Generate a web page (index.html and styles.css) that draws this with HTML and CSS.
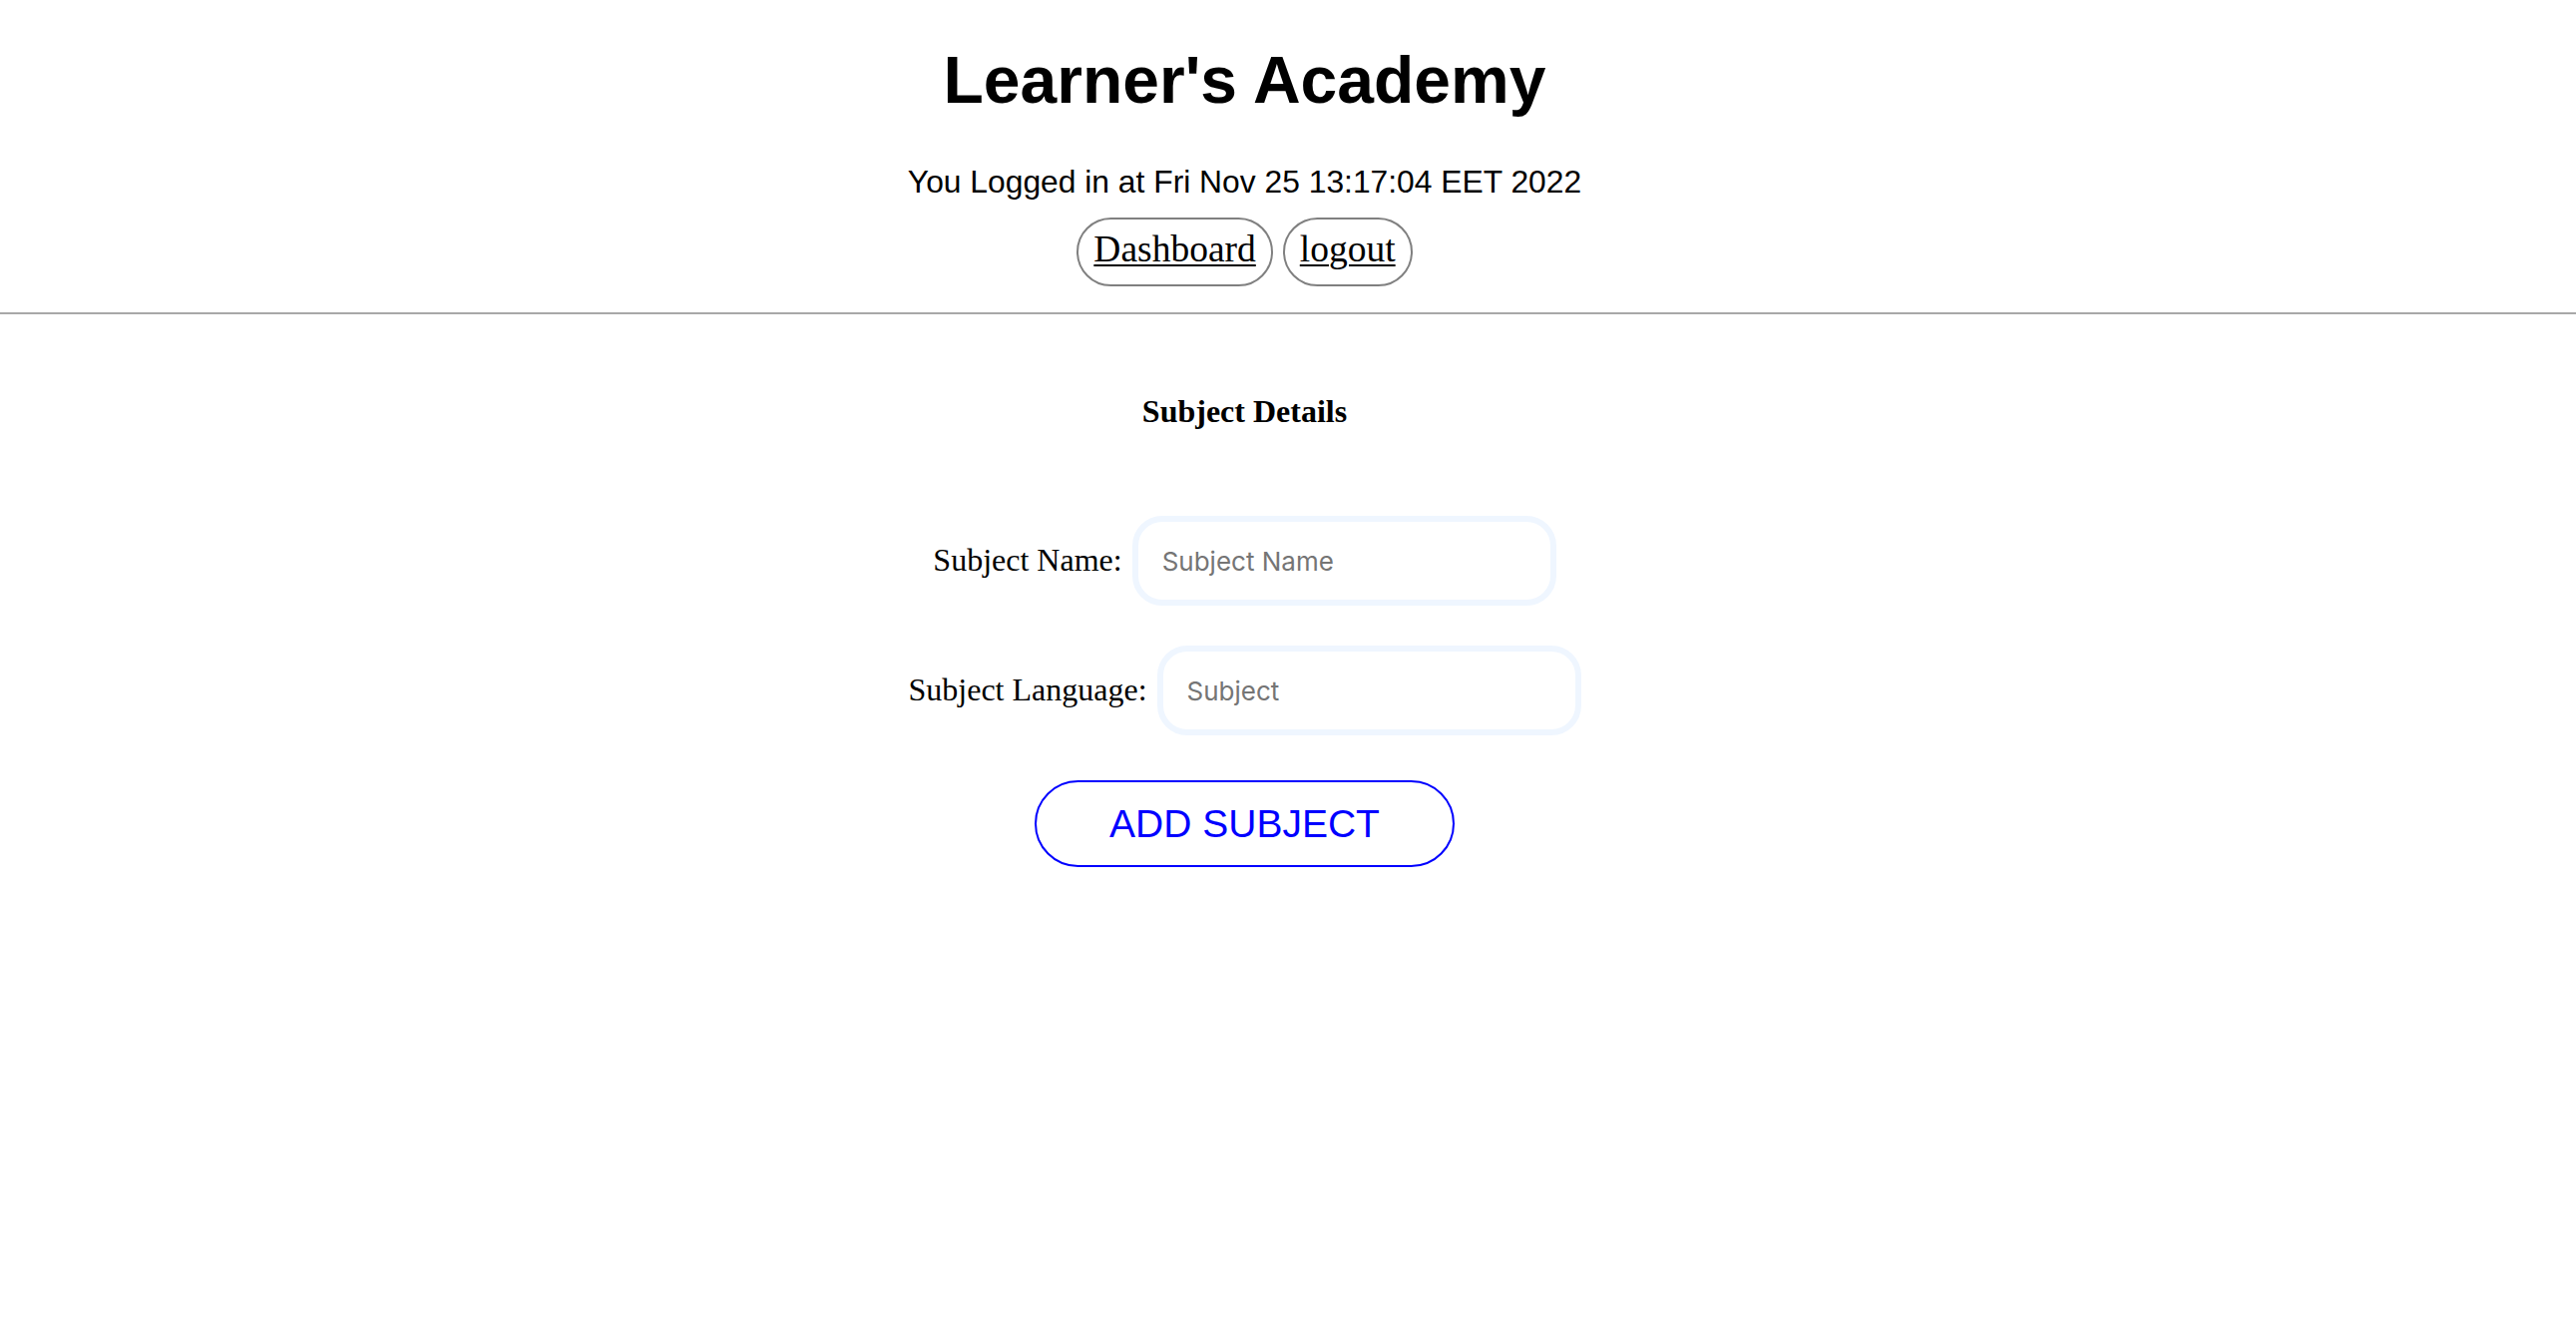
FILE: index.html
```html
<!DOCTYPE html>
<html lang="en">
<head>
<meta charset="utf-8">
<title>Learner's Academy</title>
<link rel="stylesheet" href="styles.css">
</head>
<body>
<header class="top">
  <h1 class="brand">Learner's Academy</h1>
  <p class="login">You Logged in at Fri Nov 25 13:17:04 EET 2022</p>
  <nav class="nav">
    <a class="pill" href="#">Dashboard</a>
    <a class="pill" href="#">logout</a>
  </nav>
</header>
<hr class="rule">
<main class="content">
  <h4 class="section-title">Subject Details</h4>
  <form class="subject-form">
    <div class="row">
      <label class="field-label" for="sname">Subject Name:</label>
      <input class="field" id="sname" type="text" placeholder="Subject Name">
    </div>
    <div class="row">
      <label class="field-label" for="slang">Subject Language:</label>
      <input class="field" id="slang" type="text" placeholder="Subject">
    </div>
    <div class="actions">
      <button class="submit" type="button">ADD SUBJECT</button>
    </div>
  </form>
</main>
</body>
</html>
```

FILE: styles.css
```css
html, body {
  margin: 0;
  padding: 0;
  background: #ffffff;
}

body {
  font-family: "Liberation Serif", "Times New Roman", serif;
  color: #000;
}

.top {
  margin-right: 87px;
  text-align: center;
}

.brand {
  margin: 42px 0 0;
  font-family: "Liberation Sans", Arial, sans-serif;
  font-weight: bold;
  font-size: 66px;
  line-height: 76px;
}

.login {
  margin: 46px 0 0;
  font-family: "Liberation Sans", Arial, sans-serif;
  font-size: 31.8px;
  line-height: 36px;
}

.nav {
  display: flex;
  justify-content: center;
  gap: 10px;
  margin: 18px 0 26px;
}

.pill {
  display: block;
  border: 2px solid #808080;
  border-radius: 40px;
  padding: 9px 15px 15px;
  font-family: "Liberation Serif", "Times New Roman", serif;
  font-size: 37.5px;
  line-height: 41px;
  color: #000;
  text-decoration: underline;
  text-decoration-thickness: 2px;
  text-underline-offset: 3px;
}

.rule {
  margin: 0;
  border: 0;
  border-top: 2px solid #a8a8a8;
  height: 0;
}

.content {
  margin-right: 87px;
  text-align: center;
}

.section-title {
  margin: 79px 0 0;
  font-family: "Liberation Serif", "Times New Roman", serif;
  font-weight: bold;
  font-size: 32px;
  line-height: 36px;
}

.subject-form {
  margin: 87px 0 0;
  display: flex;
  flex-direction: column;
  gap: 40px;
}

.row {
  display: flex;
  justify-content: center;
  align-items: baseline;
  gap: 10px;
}

.field-label {
  font-family: "Liberation Serif", "Times New Roman", serif;
  font-size: 32px;
}

.field {
  box-sizing: border-box;
  width: 425px;
  height: 90px;
  border: 6px solid #eff6ff;
  border-radius: 30px;
  padding: 0 24px;
  font-family: Inter, "Noto Sans", sans-serif;
  font-size: 26px;
  color: #000;
  background: #fff;
  outline: none;
}

.field::placeholder {
  color: #757575;
}

.actions {
  display: flex;
  justify-content: center;
  margin-top: 5px;
}

.submit {
  box-sizing: border-box;
  width: 421px;
  height: 87px;
  border: 2px solid #0000ff;
  border-radius: 44px;
  background: #fff;
  color: #0000ff;
  font-family: "Liberation Sans", Arial, sans-serif;
  font-size: 39px;
  padding: 0;
}
```
